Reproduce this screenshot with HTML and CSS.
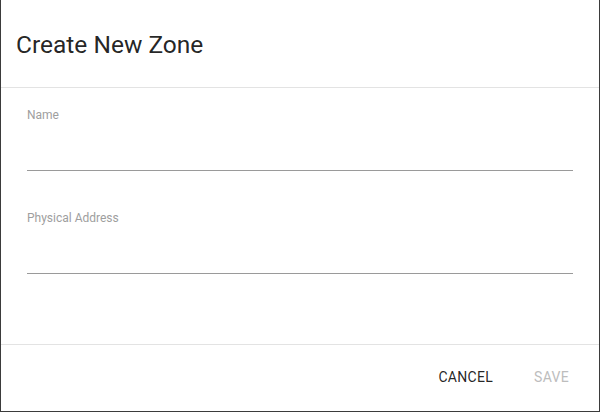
FILE: index.html
```html
<!DOCTYPE html>
<html lang="en">
<head>
<meta charset="utf-8">
<title>Create New Zone</title>
<link rel="stylesheet" href="styles.css">
</head>
<body>
<div class="dialog">
  <div class="dialog-title">Create New Zone</div>
  <div class="dialog-body">
    <div class="field">
      <label class="field-label">Name</label>
      <div class="field-input"></div>
    </div>
    <div class="field">
      <label class="field-label">Physical Address</label>
      <div class="field-input"></div>
    </div>
  </div>
  <div class="dialog-actions">
    <button class="btn btn-primary">CANCEL</button>
    <button class="btn btn-disabled">SAVE</button>
  </div>
</div>
</body>
</html>
```
FILE: styles.css
```css
html, body {
  margin: 0;
  padding: 0;
  background: #3b3b3b;
  width: 600px;
  height: 412px;
  overflow: hidden;
}
body {
  font-family: Roboto, "Liberation Sans", sans-serif;
}
.dialog {
  margin: 0 1px;
  width: 598px;
  height: 411px;
  background: #ffffff;
  display: flex;
  flex-direction: column;
}
.dialog-title {
  padding: 29px 16px 26px 15px;
  font-size: 24.5px;
  line-height: 32px;
  color: rgba(0, 0, 0, 0.87);
  border-bottom: 1px solid #e3e3e3;
}
.dialog-body {
  flex: 1;
  padding: 19px 26px 0 26px;
  display: flex;
  flex-direction: column;
  gap: 39px;
  border-bottom: 1px solid #e3e3e3;
}
.field {
  display: flex;
  flex-direction: column;
}
.field-label {
  font-size: 12px;
  line-height: 16px;
  color: #9e9e9e;
}
.field-input {
  height: 47px;
  border-bottom: 1px solid #9a9a9a;
}
.dialog-actions {
  height: 66px;
  box-sizing: border-box;
  padding: 14px 14px 16px 0;
  display: flex;
  justify-content: flex-end;
  align-items: flex-start;
  gap: 9px;
}
.btn {
  font-family: Roboto, "Liberation Sans", sans-serif;
  font-size: 14px;
  font-weight: 400;
  letter-spacing: 0.3px;
  line-height: 36px;
  height: 36px;
  padding: 0 16px;
  border: none;
  background: transparent;
  cursor: pointer;
}
.btn-primary {
  color: rgba(0, 0, 0, 0.87);
}
.btn-disabled {
  color: #bdbdbd;
}
```
